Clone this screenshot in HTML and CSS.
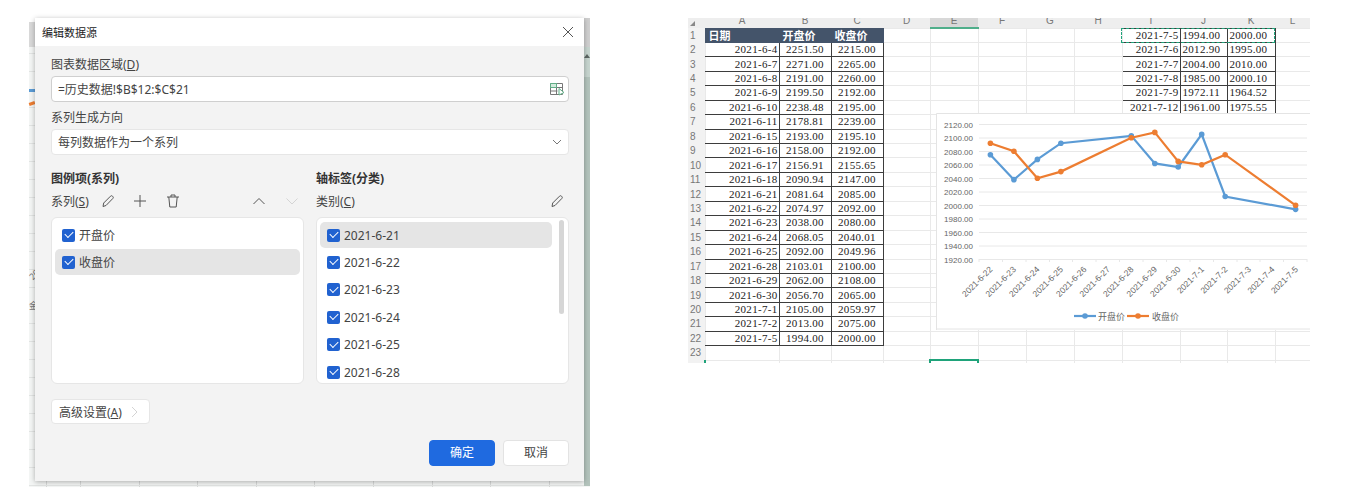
FILE: index.html
```html
<!DOCTYPE html>
<html lang="zh">
<head>
    <meta charset="UTF-8">
    <title>编辑数据源</title>
    <link rel="stylesheet" href="styles.css">
</head>
<body>
    <div class="page">
        <div class="behind">
            <span class="behind-band"></span>
            <span class="behind-edge"></span>
            <span class="behind-arrow"></span>
            <span class="behind-blue"></span>
            <span class="behind-orange"></span>
            <span class="behind-text one">20</span>
            <span class="behind-text two">金</span>
        </div>

        <div class="dialog">
            <div class="title">
                <span>编辑数据源</span>
                <svg class="icon" width="12" height="12" viewBox="0 0 12 12"><path d="M1 1l10 10M11 1L1 11" class="stroke"/></svg>
            </div>
            <div class="body">
                <div class="label">图表数据区域(<u>D</u>)</div>
                <div class="field strong">
                    <span>=历史数据!$B$12:$C$21</span>
                    <svg width="16" height="14" viewBox="0 0 16 14">
                        <path d="M1.5 1.5h12v11h-12zM1.5 5.5h12M1.5 9h7M7.5 5.5v7" class="stroke thin"/>
                        <path d="M1.5 1.5h6v4h-6z" fill="#d3eadd" stroke="#5fae86"/>
                        <path d="M10 6.5l5 4-5 2.5z" fill="#ffffff" stroke="#5fae86"/>
                    </svg>
                </div>
                <div class="label">系列生成方向</div>
                <div class="field">
                    <span>每列数据作为一个系列</span>
                    <svg width="10" height="6" viewBox="0 0 10 6"><path d="M1 1l4 4 4-4" class="stroke thin"/></svg>
                </div>

                <div class="columns">
                    <div class="column">
                        <div class="heading">图例项(系列)</div>
                        <div class="tools">
                            <span class="tools-name">系列(<u>S</u>)</span>
                            <svg class="tool pencil" width="14" height="14" viewBox="0 0 14 14"><path d="M2 12.5l.7-3.5L9.5 2.2a1.4 1.4 0 0 1 2 0l.3.3a1.4 1.4 0 0 1 0 2L5 11.5z" class="stroke"/></svg>
                            <svg class="tool plus" width="14" height="14" viewBox="0 0 14 14"><path d="M7 1v12M1 7h12" class="stroke"/></svg>
                            <svg class="tool trash" width="14" height="14" viewBox="0 0 14 14"><path d="M1 3h12M5 3V1h4v2M2.8 3l1 10h6.4l1-10" class="stroke"/></svg>
                            <svg class="tool up" width="14" height="14" viewBox="0 0 14 14"><path d="M1.5 10L7 4.5l5.5 5.5" class="stroke"/></svg>
                            <svg class="tool down" width="14" height="14" viewBox="0 0 14 14"><path d="M1.5 4.5L7 10l5.5-5.5" class="stroke faded"/></svg>
                        </div>
                        <div class="list">
                            <div class="item"><i class="check"></i>开盘价</div>
                            <div class="item on"><i class="check"></i>收盘价</div>
                        </div>
                    </div>
                    <div class="column">
                        <div class="heading">轴标签(分类)</div>
                        <div class="tools">
                            <span class="tools-name">类别(<u>C</u>)</span>
                            <svg class="tool pencil-end" width="14" height="14" viewBox="0 0 14 14"><path d="M2 12.5l.7-3.5L9.5 2.2a1.4 1.4 0 0 1 2 0l.3.3a1.4 1.4 0 0 1 0 2L5 11.5z" class="stroke"/></svg>
                        </div>
                        <div class="list dates">
                            <div class="item on"><i class="check"></i>2021-6-21</div>
                            <div class="item"><i class="check"></i>2021-6-22</div>
                            <div class="item"><i class="check"></i>2021-6-23</div>
                            <div class="item"><i class="check"></i>2021-6-24</div>
                            <div class="item"><i class="check"></i>2021-6-25</div>
                            <div class="item"><i class="check"></i>2021-6-28</div>
                            <span class="scrollbar"></span>
                        </div>
                    </div>
                </div>

                <div class="more">
                    <span>高级设置(<u>A</u>)</span>
                    <svg width="7" height="12" viewBox="0 0 7 12"><path d="M1 1l5 5-5 5" class="stroke faded"/></svg>
                </div>
                <div class="buttons">
                    <div class="btn primary">确定</div>
                    <div class="btn">取消</div>
                </div>
            </div>
        </div>

        <div class="sheet">
            <table>
                <colgroup>
                    <col class="c-row"><col class="c-a"><col class="c-b"><col class="c-c"><col class="c-d"><col class="c-e"><col class="c-f"><col class="c-g"><col class="c-h"><col class="c-i"><col class="c-j"><col class="c-k"><col class="c-l">
                </colgroup>
                <tr class="letters"><th></th><th>A</th><th>B</th><th>C</th><th>D</th><th class="active">E</th><th>F</th><th>G</th><th>H</th><th>I</th><th>J</th><th>K</th><th>L</th></tr>
                <tr><th>1</th><td class="head">日期</td><td class="head">开盘价</td><td class="head">收盘价</td><td></td><td></td><td></td><td></td><td></td><td class="n r">2021-7-5</td><td class="n l">1994.00</td><td class="n l">2000.00</td><td></td></tr>
                <tr><th>2</th><td class="n a">2021-6-4</td><td class="n c">2251.50</td><td class="n c">2215.00</td><td></td><td></td><td></td><td></td><td></td><td class="n r">2021-7-6</td><td class="n l">2012.90</td><td class="n l">1995.00</td><td></td></tr>
                <tr><th>3</th><td class="n a">2021-6-7</td><td class="n c">2271.00</td><td class="n c">2265.00</td><td></td><td></td><td></td><td></td><td></td><td class="n r">2021-7-7</td><td class="n l">2004.00</td><td class="n l">2010.00</td><td></td></tr>
                <tr><th>4</th><td class="n a">2021-6-8</td><td class="n c">2191.00</td><td class="n c">2260.00</td><td></td><td></td><td></td><td></td><td></td><td class="n r">2021-7-8</td><td class="n l">1985.00</td><td class="n l">2000.10</td><td></td></tr>
                <tr><th>5</th><td class="n a">2021-6-9</td><td class="n c">2199.50</td><td class="n c">2192.00</td><td></td><td></td><td></td><td></td><td></td><td class="n r">2021-7-9</td><td class="n l">1972.11</td><td class="n l">1964.52</td><td></td></tr>
                <tr><th>6</th><td class="n a">2021-6-10</td><td class="n c">2238.48</td><td class="n c">2195.00</td><td></td><td></td><td></td><td></td><td></td><td class="n r">2021-7-12</td><td class="n l">1961.00</td><td class="n l">1975.55</td><td></td></tr>
                <tr><th>7</th><td class="n a">2021-6-11</td><td class="n c">2178.81</td><td class="n c">2239.00</td><td></td><td></td><td></td><td></td><td></td><td></td><td></td><td></td><td></td></tr>
                <tr><th>8</th><td class="n a">2021-6-15</td><td class="n c">2193.00</td><td class="n c">2195.10</td><td></td><td></td><td></td><td></td><td></td><td></td><td></td><td></td><td></td></tr>
                <tr><th>9</th><td class="n a">2021-6-16</td><td class="n c">2158.00</td><td class="n c">2192.00</td><td></td><td></td><td></td><td></td><td></td><td></td><td></td><td></td><td></td></tr>
                <tr><th>10</th><td class="n a">2021-6-17</td><td class="n c">2156.91</td><td class="n c">2155.65</td><td></td><td></td><td></td><td></td><td></td><td></td><td></td><td></td><td></td></tr>
                <tr><th>11</th><td class="n a">2021-6-18</td><td class="n c">2090.94</td><td class="n c">2147.00</td><td></td><td></td><td></td><td></td><td></td><td></td><td></td><td></td><td></td></tr>
                <tr><th>12</th><td class="n a">2021-6-21</td><td class="n c">2081.64</td><td class="n c">2085.00</td><td></td><td></td><td></td><td></td><td></td><td></td><td></td><td></td><td></td></tr>
                <tr><th>13</th><td class="n a">2021-6-22</td><td class="n c">2074.97</td><td class="n c">2092.00</td><td></td><td></td><td></td><td></td><td></td><td></td><td></td><td></td><td></td></tr>
                <tr><th>14</th><td class="n a">2021-6-23</td><td class="n c">2038.00</td><td class="n c">2080.00</td><td></td><td></td><td></td><td></td><td></td><td></td><td></td><td></td><td></td></tr>
                <tr><th>15</th><td class="n a">2021-6-24</td><td class="n c">2068.05</td><td class="n c">2040.01</td><td></td><td></td><td></td><td></td><td></td><td></td><td></td><td></td><td></td></tr>
                <tr><th>16</th><td class="n a">2021-6-25</td><td class="n c">2092.00</td><td class="n c">2049.96</td><td></td><td></td><td></td><td></td><td></td><td></td><td></td><td></td><td></td></tr>
                <tr><th>17</th><td class="n a">2021-6-28</td><td class="n c">2103.01</td><td class="n c">2100.00</td><td></td><td></td><td></td><td></td><td></td><td></td><td></td><td></td><td></td></tr>
                <tr><th>18</th><td class="n a">2021-6-29</td><td class="n c">2062.00</td><td class="n c">2108.00</td><td></td><td></td><td></td><td></td><td></td><td></td><td></td><td></td><td></td></tr>
                <tr><th>19</th><td class="n a">2021-6-30</td><td class="n c">2056.70</td><td class="n c">2065.00</td><td></td><td></td><td></td><td></td><td></td><td></td><td></td><td></td><td></td></tr>
                <tr><th>20</th><td class="n a">2021-7-1</td><td class="n c">2105.00</td><td class="n c">2059.97</td><td></td><td></td><td></td><td></td><td></td><td></td><td></td><td></td><td></td></tr>
                <tr><th>21</th><td class="n a">2021-7-2</td><td class="n c">2013.00</td><td class="n c">2075.00</td><td></td><td></td><td></td><td></td><td></td><td></td><td></td><td></td><td></td></tr>
                <tr><th>22</th><td class="n a">2021-7-5</td><td class="n c">1994.00</td><td class="n c">2000.00</td><td></td><td></td><td></td><td></td><td></td><td></td><td></td><td></td><td></td></tr>
                <tr><th>23</th><td></td><td></td><td></td><td></td><td></td><td></td><td></td><td></td><td></td><td></td><td></td><td></td></tr>
                <tr><th></th><td></td><td></td><td></td><td></td><td class="cursor"></td><td></td><td></td><td></td><td></td><td></td><td></td><td></td></tr>
            </table>

            <span class="corner"></span>
            <span class="ants"></span>
            <span class="row-tick"></span>

            <svg class="chart" width="374" height="217" viewBox="936 113 374 217">
                <defs>
                    <marker id="dot-blue" markerUnits="userSpaceOnUse" markerWidth="7" markerHeight="7" refX="3.5" refY="3.5"><circle cx="3.5" cy="3.5" r="2.8" fill="#5b9bd5"/></marker>
                    <marker id="dot-orange" markerUnits="userSpaceOnUse" markerWidth="7" markerHeight="7" refX="3.5" refY="3.5"><circle cx="3.5" cy="3.5" r="2.8" fill="#ed7d31"/></marker>
                </defs>
                <path class="frame" d="M936.5 330V113.5H1310M936 329H1310"/>
                <path class="grid" d="M979 124.5H1307M979 138H1307M979 151.5H1307M979 165H1307M979 178.5H1307M979 192H1307M979 205.5H1307M979 219H1307M979 232.5H1307M979 246H1307M979 259.5H1307"/>
                <path class="grid" d="M979 259v3M1002.5 259v3M1026 259v3M1049.5 259v3M1072.5 259v3M1096 259v3M1119.5 259v3M1143 259v3M1166.5 259v3M1190 259v3M1213.5 259v3M1237 259v3M1260 259v3M1283.5 259v3M1307 259v3"/>

                <g class="y-labels">
                    <text x="973" y="127.5">2120.00</text>
                    <text x="973" y="141">2100.00</text>
                    <text x="973" y="154.5">2080.00</text>
                    <text x="973" y="168">2060.00</text>
                    <text x="973" y="181.5">2040.00</text>
                    <text x="973" y="195">2020.00</text>
                    <text x="973" y="208.5">2000.00</text>
                    <text x="973" y="222">1980.00</text>
                    <text x="973" y="235.5">1960.00</text>
                    <text x="973" y="249">1940.00</text>
                    <text x="973" y="262.5">1920.00</text>
                </g>
                <g class="x-labels">
                    <text transform="translate(993 270) rotate(-45)">2021-6-22</text>
                    <text transform="translate(1016.5 270) rotate(-45)">2021-6-23</text>
                    <text transform="translate(1040 270) rotate(-45)">2021-6-24</text>
                    <text transform="translate(1063.5 270) rotate(-45)">2021-6-25</text>
                    <text transform="translate(1087 270) rotate(-45)">2021-6-26</text>
                    <text transform="translate(1110.5 270) rotate(-45)">2021-6-27</text>
                    <text transform="translate(1134 270) rotate(-45)">2021-6-28</text>
                    <text transform="translate(1157.5 270) rotate(-45)">2021-6-29</text>
                    <text transform="translate(1181 270) rotate(-45)">2021-6-30</text>
                    <text transform="translate(1204.5 270) rotate(-45)">2021-7-1</text>
                    <text transform="translate(1228 270) rotate(-45)">2021-7-2</text>
                    <text transform="translate(1251.5 270) rotate(-45)">2021-7-3</text>
                    <text transform="translate(1275 270) rotate(-45)">2021-7-4</text>
                    <text transform="translate(1298.5 270) rotate(-45)">2021-7-5</text>
                </g>

                <polyline class="line blue" points="990.4,154.7 1013.9,179.65 1037.4,159.4 1060.9,143.2 1131.3,135.8 1154.8,163.45 1178.2,167 1201.7,134.4 1225.2,196.5 1295.6,209.35"/>
                <polyline class="line orange" points="990.4,143.2 1013.9,151.3 1037.4,178.3 1060.9,171.6 1131.3,137.8 1154.8,132.4 1178.2,161.4 1201.7,164.8 1225.2,154.7 1295.6,205.3"/>

                <polyline class="line blue key" points="1074,316 1085,316 1096,316"/>
                <text class="legend" x="1098" y="319.5">开盘价</text>
                <polyline class="line orange key" points="1127,316 1138,316 1149,316"/>
                <text class="legend" x="1152" y="319.5">收盘价</text>
            </svg>
        </div>
    </div>
</body>
</html>
```

FILE: styles.css
```css
* {
    box-sizing: border-box;
}

body {
    margin: 0;
    background: #ffffff;
    font-family: "Noto Sans", "Noto Sans CJK SC", sans-serif;
    font-size: 12px;
    color: #444444;
}

.page {
    position: relative;
    display: flex;
    align-items: flex-start;
    height: 504px;
    overflow: hidden;
    padding-top: 18px;
}

/* window behind the dialog, only its edges show */
.behind {
    position: absolute;
    left: 29px;
    top: 22px;
    width: 561px;
    height: 465px;
    background-color: #f4f6f5;
    background-image:
        repeating-linear-gradient(to bottom, #e2e4e3 0, #e2e4e3 1px, transparent 1px, transparent 18px),
        repeating-linear-gradient(to right, #d8dad9 0, #d8dad9 1px, transparent 1px, transparent 58.6px);
    background-position: 0 13px, 51px 0;
}

.behind-band {
    position: absolute;
    left: 0;
    top: 0;
    width: 6px;
    height: 25px;
    background: #d9d9d9;
}

.behind-edge {
    position: absolute;
    right: 0;
    top: -4px;
    width: 6px;
    height: 468px;
    background: linear-gradient(to bottom, #cfcfcf 0, #cfcfcf 29px, #c6d4ce 29px, #c6d4ce 59px, #b3c3bc 59px);
}

.behind-arrow {
    position: absolute;
    right: 0;
    top: 32px;
    width: 0;
    height: 0;
    border-left: 3px solid transparent;
    border-right: 3px solid transparent;
    border-bottom: 4px solid #5c6663;
}

.behind-blue,
.behind-orange {
    position: absolute;
    left: 0;
    width: 6px;
    height: 3px;
}

.behind-blue {
    top: 67px;
    background: #5b9bd5;
}

.behind-orange {
    top: 80px;
    background: #ed7d31;
    transform: rotate(-20deg);
}

.behind-text {
    position: absolute;
    left: 0;
    font-size: 9px;
    color: #777777;
}

.behind-text.one {
    top: 246px;
    transform: rotate(-45deg);
}

.behind-text.two {
    top: 277px;
}

.dialog {
    position: relative;
    flex: none;
    width: 549px;
    height: 463px;
    margin-left: 35px;
    background: #f3f3f3;
    box-shadow: 0 1px 5px rgba(0, 0, 0, 0.3);
}

.title {
    display: flex;
    justify-content: space-between;
    align-items: center;
    height: 28px;
    padding: 0 10px 0 7px;
    background: #ffffff;
    font-size: 11px;
    color: #222222;
}

.stroke {
    fill: none;
    stroke: #555555;
    stroke-width: 1;
}

.stroke.thin {
    stroke: #777777;
}

.stroke.faded {
    stroke: #d4d4d4;
}

.body {
    padding: 8px 15px 0 16px;
}

.label {
    height: 21px;
    line-height: 21px;
}

.label + .field {
    margin-bottom: 5px;
}

.field {
    display: flex;
    justify-content: space-between;
    align-items: center;
    height: 26px;
    margin-top: 1px;
    padding: 0 6px;
    background: #ffffff;
    border: 1px solid #e6e6e6;
    border-radius: 4px;
}

.field.strong {
    border-color: #cfcfcf;
    padding-right: 3px;
}

.columns {
    display: flex;
    gap: 12px;
    margin-top: 12px;
}

.column {
    width: 253px;
}

.heading {
    height: 23px;
    line-height: 23px;
    font-weight: 700;
    color: #333333;
}

.tools {
    display: flex;
    align-items: center;
    height: 22px;
    margin-bottom: 5px;
}

.tools-name {
    width: 50px;
}

.tool.plus {
    margin-left: 18px;
}

.tool.trash {
    margin-left: 19px;
}

.tool.up {
    margin-left: 72px;
}

.tool.down {
    margin-left: 19px;
}

.tool.pencil-end {
    margin-left: auto;
    margin-right: 5px;
}

.list {
    position: relative;
    height: 167px;
    padding: 4px 3px;
    overflow: hidden;
    background: #ffffff;
    border: 1px solid #e6e6e6;
    border-radius: 6px;
}

.item {
    display: flex;
    align-items: center;
    gap: 4px;
    height: 26px;
    margin-bottom: 1.45px;
    padding-left: 7px;
    border-radius: 5px;
    font-size: 12px;
    color: #444444;
}

.item.on {
    background: #e5e5e5;
}

.dates .item {
    width: 232px;
}

.check {
    position: relative;
    flex: none;
    width: 13px;
    height: 13px;
    background: #2162d0;
    border-radius: 2px;
}

.check::after {
    content: "";
    position: absolute;
    left: 3px;
    top: 2.5px;
    width: 7px;
    height: 4px;
    border-left: 1.2px solid #ffffff;
    border-bottom: 1.2px solid #ffffff;
    transform: rotate(-45deg);
}

.scrollbar {
    position: absolute;
    left: 242px;
    top: 2px;
    width: 5px;
    height: 94px;
    background: #d6d6d6;
    border-radius: 3px;
}

.more {
    display: flex;
    align-items: center;
    justify-content: space-between;
    width: 99px;
    height: 25px;
    margin-top: 15px;
    padding: 0 11px 0 7px;
    background: #ffffff;
    border: 1px solid #e6e6e6;
    border-radius: 4px;
}

.buttons {
    display: flex;
    justify-content: flex-end;
    gap: 8px;
    margin-top: 16px;
}

.btn {
    width: 66px;
    height: 26px;
    line-height: 24px;
    text-align: center;
    background: #ffffff;
    border: 1px solid #e3e3e3;
    border-radius: 4px;
}

.btn.primary {
    background: #1f6ae0;
    border-color: #1f6ae0;
    color: #ffffff;
}

/* spreadsheet */
.sheet {
    position: relative;
    flex: none;
    width: 622px;
    height: 345px;
    margin-left: 104px;
    overflow: hidden;
}

.sheet table {
    width: 622px;
    margin-top: -4px;
    table-layout: fixed;
    border-collapse: collapse;
}

.c-row { width: 17px; }
.c-a { width: 74px; }
.c-b { width: 52px; }
.c-c { width: 52px; }
.c-d { width: 47px; }
.c-e { width: 48px; }
.c-f { width: 48px; }
.c-g { width: 48px; }
.c-h { width: 48px; }
.c-i { width: 58px; }
.c-j { width: 47px; }
.c-k { width: 48px; }
.c-l { width: 35px; }

.sheet tr {
    height: 14.45px;
}

.sheet td,
.sheet th {
    padding: 0;
    height: 14.45px;
    line-height: 13px;
    overflow: hidden;
    white-space: nowrap;
}

.sheet td {
    border: 1px solid #e9e9e9;
}

.sheet th {
    background: #f2f2f2;
    font-family: "Liberation Sans", sans-serif;
    font-size: 10px;
    font-weight: 400;
    color: #777777;
    text-align: left;
    padding-left: 2px;
}

.sheet .letters {
    height: 14px;
}

.sheet .letters th {
    height: 14px;
    padding-left: 0;
    text-align: center;
    background: #eeeeee;
}

.sheet .letters th.active {
    background: #d8d8d8;
    border-bottom: 2px solid #4fae8a;
}

.sheet td.n {
    border: 1px solid #3d3d3d;
    font-family: "Liberation Serif", serif;
    font-size: 11px;
    letter-spacing: 0.3px;
    color: #222222;
}

.sheet td.a {
    padding-right: 1px;
    text-align: right;
    border-left-color: #e9e9e9;
}

.sheet td.r {
    padding-right: 1px;
    text-align: right;
}

.sheet td.c {
    text-align: center;
}

.sheet td.l {
    padding-left: 2px;
    text-align: left;
}

.sheet td.head {
    padding-left: 3px;
    background: #44546a;
    border: 1px solid #44546a;
    font-family: "Noto Sans CJK SC", sans-serif;
    font-size: 11px;
    font-weight: 700;
    color: #ffffff;
}

.sheet td.cursor {
    border-top: 2px solid #1fa37a;
    border-left: 2px solid #1fa37a;
    border-right: 2px solid #1fa37a;
}

.corner {
    position: absolute;
    left: 2px;
    top: 3px;
    width: 0;
    height: 0;
    border-left: 5px solid transparent;
    border-bottom: 5px solid #888888;
}

.ants {
    position: absolute;
    left: 433px;
    top: 10px;
    width: 154px;
    height: 15px;
    border: 1px dashed #1fa37a;
}

.row-tick {
    position: absolute;
    left: 16px;
    top: 342px;
    width: 2px;
    height: 3px;
    background: #1fa37a;
}

.chart {
    position: absolute;
    left: 248px;
    top: 95px;
    background: #ffffff;
}

.frame {
    fill: none;
    stroke: #e4e4e4;
    stroke-width: 1;
}

.grid {
    fill: none;
    stroke: #e8e8e8;
    stroke-width: 1;
}

.y-labels text {
    font-family: "Liberation Sans", sans-serif;
    font-size: 8px;
    fill: #666666;
    text-anchor: end;
}

.x-labels text {
    font-family: "Liberation Sans", sans-serif;
    font-size: 8.5px;
    fill: #666666;
    text-anchor: end;
}

.line {
    fill: none;
    stroke-width: 2.2;
}

.line.blue {
    stroke: #5b9bd5;
    marker-start: url(#dot-blue);
    marker-mid: url(#dot-blue);
    marker-end: url(#dot-blue);
}

.line.orange {
    stroke: #ed7d31;
    marker-start: url(#dot-orange);
    marker-mid: url(#dot-orange);
    marker-end: url(#dot-orange);
}

.line.key {
    marker-start: none;
    marker-end: none;
}

.legend {
    font-size: 9px;
    fill: #666666;
}
```
